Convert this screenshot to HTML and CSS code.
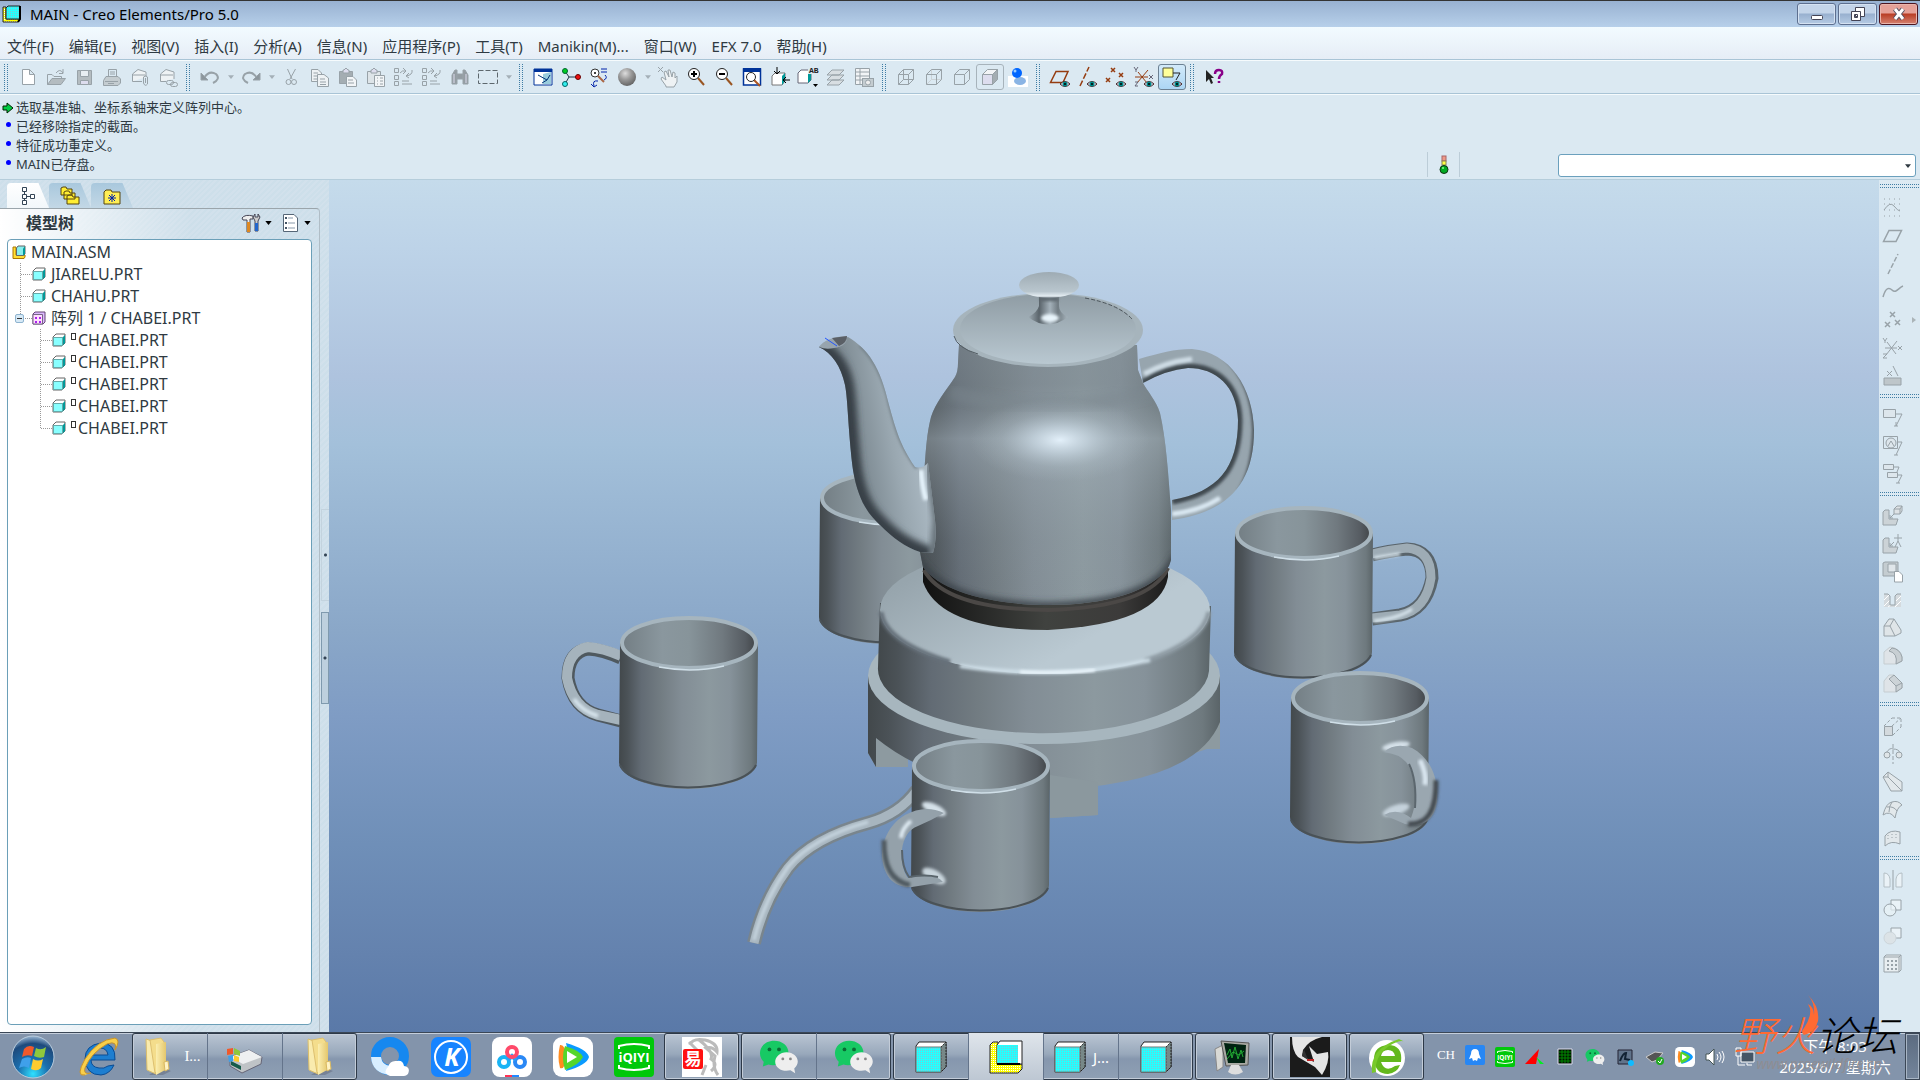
FILE: index.html
```
<!DOCTYPE html>
<html lang="zh-CN">
<head>
    <meta charset="utf-8">
    <meta name="viewport" content="width=device-width, initial-scale=1">
    <title>MAIN - Creo Elements/Pro 5.0</title>
    <link rel="stylesheet" href="styles.css">
</head>
<body>
    <!-- 共用图形 -->
    <svg class="defs" width="0" height="0" aria-hidden="true">
        <defs>
            <pattern id="cyanDots" width="2" height="2" patternUnits="userSpaceOnUse">
                <rect width="2" height="2" fill="#2ff"/><rect width="1" height="1" fill="#7cc8d0"/>
            </pattern>
            <pattern id="yellowDots" width="2" height="2" patternUnits="userSpaceOnUse">
                <rect width="2" height="2" fill="#ff0"/><rect width="1" height="1" fill="#fff"/>
            </pattern>
            <linearGradient id="folderFill"><stop offset="0" stop-color="#fbeeb0"/><stop offset="1" stop-color="#e2c366"/></linearGradient>
            <radialGradient id="ball" cx=".4" cy=".3" r=".7"><stop offset="0" stop-color="#ddd"/><stop offset=".5" stop-color="#999"/><stop offset="1" stop-color="#666"/></radialGradient>
            <radialGradient id="orb" cx=".5" cy=".9" r=".9"><stop offset="0" stop-color="#2fe0ff"/><stop offset=".4" stop-color="#1b6fae"/><stop offset=".8" stop-color="#1d4a7c"/><stop offset="1" stop-color="#9db9d4"/></radialGradient>
        </defs>
        <symbol id="part" viewBox="0 0 14 14">
            <path d="M1 4L4 1H13V10L10 13H1Z" fill="#fff" stroke="#666"/>
            <path d="M10.500 4.500L13 2V10L10.500 12.500Z" fill="#099"/>
            <rect x="1.500" y="4.500" width="9" height="8" fill="#8ff" stroke="#6aa"/>
        </symbol>
        <symbol id="asm" viewBox="0 0 14 14">
            <path d="M1 2H4V10H13V12L12 13.500H1Z" fill="#fd3" stroke="#a70"/>
            <path d="M4.500 3L6 1H13V9L11.500 10.500H4.500Z" fill="#8ee" stroke="#666"/>
            <path d="M11 3.500L13 1.500V9L11 10.500Z" fill="#099"/>
        </symbol>
        <symbol id="elbow" viewBox="0 0 12 22"><path d="M.5 0V22M1 11.500H12" fill="none" stroke="#999" stroke-dasharray="1 1"/></symbol>
        <symbol id="elbow-end" viewBox="0 0 12 22"><path d="M.5 0V11.500H12" fill="none" stroke="#999" stroke-dasharray="1 1"/></symbol>
        <symbol id="eye" viewBox="0 0 10 8"><path d="M0 4Q5 -1 10 4Q5 9 0 4Z" fill="#dde" stroke="#422"/><circle cx="5" cy="4" r="2.500" fill="#088"/><circle cx="5" cy="4" r="1"/></symbol>
        <symbol id="folder" viewBox="0 0 34 40">
            <path d="M20 30L30 34L22 38L8 38Z" fill="#445" opacity=".3"/>
            <path d="M5 2L14 5L15 37L6 33Z" fill="#f9ebae" stroke="#d9bd6c"/>
            <path d="M9 3L20 1L23 5V28L14 36Z" fill="#f4dd8c" stroke="#ddc070"/>
            <path d="M15 7L25 5V26L26 32L15 38Z" fill="url(#folderFill)"/>
            <path d="M23 25L27 24L28 32L24 34Z" fill="#fff3c4" stroke="#d8b860"/>
        </symbol>
        <symbol id="wechat" viewBox="0 0 42 36">
            <path d="M16 1C7 1 1 7 1 14C1 18 3 21 5 23L4 28L10 26C17 28 31 25 31 14C31 6 24 1 16 1Z" fill="#17c964"/>
            <circle cx="11" cy="10" r="2" fill="#0a6b35"/><circle cx="21" cy="10" r="2" fill="#0a6b35"/>
            <path d="M29 13C22 13 17 18 17 23C17 30 25 34 33 32L38 35L37 30C45 23 39 13 29 13Z" fill="#eee"/>
            <circle cx="25" cy="20" r="1.500" fill="#888"/><circle cx="33" cy="20" r="1.500" fill="#888"/>
        </symbol>
        <symbol id="cube" viewBox="0 0 34 34">
            <path d="M2 6L5 2H32V27L27 32H2Z" fill="#fff" stroke="#222"/>
            <path d="M27 7L32 2V27L27 32Z" fill="#788" stroke="#222" stroke-dasharray="2 1"/>
            <rect x="2" y="7" width="25" height="25" fill="url(#cyanDots)" stroke="#777"/>
        </symbol>
        <symbol id="caret" viewBox="0 0 8 5"><path d="M0 0H8L4 5Z" fill="currentColor"/></symbol>
        <symbol id="tencent" viewBox="0 0 40 40">
            <rect width="40" height="40" rx="9" fill="#fff"/>
            <path d="M7 8Q12 7 14 20Q12 33 7 31Q4 20 7 8Z" fill="#ff8b1f"/>
            <path d="M13 6Q34 12 36 20Q34 28 13 34Q17 20 13 6Z" fill="#0a9bff"/>
            <path d="M12 9Q28 14 30 20Q26 28 12 33Q8 20 12 9Z" fill="#54d62c"/>
            <path d="M14 14L24 20L14 26Z" fill="#fff"/>
        </symbol>
    </svg>

    <header class="titlebar">
        <svg class="app-icon" viewBox="0 0 20 18"><path d="M1 2H4V14H18V15L16 17H1Z" fill="url(#yellowDots)" stroke="#222"/><path d="M4 3L6 1H18V14H4Z" fill="url(#cyanDots)" stroke="#222"/><path d="M18 1V14L16 17" fill="none" stroke="#000" stroke-width="2"/></svg>
        <h1>MAIN - Creo Elements/Pro 5.0</h1>
        <div class="window-buttons">
            <button aria-label="最小化"><svg viewBox="0 0 16 16"><rect x="2.500" y="9.500" width="11" height="4" rx="1" fill="#fff" stroke="#445"/></svg></button>
            <button aria-label="还原"><svg viewBox="0 0 16 16"><path d="M5.500 1.500H14.500V10.500H5.500Z" fill="#fff" stroke="#445"/><path d="M1.500 5.500H10.500V14.500H1.500ZM4.500 8.500H7.500V11.500H4.500Z" fill="#fff" stroke="#445" fill-rule="evenodd"/></svg></button>
            <button class="close" aria-label="关闭"><svg viewBox="0 0 16 16"><path d="M4 3L12 13M12 3L4 13" stroke="#545060" stroke-width="5"/><path d="M4 3L12 13M12 3L4 13" stroke="#fff" stroke-width="3"/></svg></button>
        </div>
    </header>

    <nav class="menubar">
        <a href="#">文件(F)</a><a href="#">编辑(E)</a><a href="#">视图(V)</a><a href="#">插入(I)</a><a href="#">分析(A)</a><a href="#">信息(N)</a><a href="#">应用程序(P)</a><a href="#">工具(T)</a><a href="#">Manikin(M)...</a><a href="#">窗口(W)</a><a href="#">EFX 7.0</a><a href="#">帮助(H)</a>
    </nav>

    <div class="toolbar">
        <span class="grip"></span>
        <button aria-label="新建"><svg class="gray" viewBox="0 0 24 24"><path d="M6.500 4.500H13.500L18.500 9.500V19.500H6.500ZM13.500 4.500V9.500H18.500" fill="#fff"/></svg></button>
        <button aria-label="打开"><svg class="gray" viewBox="0 0 24 24"><path d="M3.500 19.500V9.500H8L10 11.500H17.500V14" /><path d="M3.500 19.500L8 13.500H21.500L17 19.500Z" fill="#b4bcc0"/><path d="M12 8Q16 3 19 8M19 4V8.500H15"/></svg></button>
        <button aria-label="保存"><svg class="gray" viewBox="0 0 24 24"><path d="M5.500 5.500H19.500V19.500H5.500Z" fill="#b4bcc0"/><path d="M8.500 5.500H16.500V11.500H8.500Z" fill="#e8eef2"/><path d="M8.500 15.500H16.500V19.500H8.500Z" fill="#dde"/></svg></button>
        <button aria-label="打印"><svg class="gray" viewBox="0 0 24 24"><path d="M8.500 12V4.500H16.500V12M10 7H15M10 9H15" fill="none"/><path d="M3.500 15.500L6 11.500H18L20.500 14V18L18 20.500H3.500Z" fill="#c4ccd0"/><path d="M5 16.500H18M8 18.500H14"/></svg></button>
        <button aria-label="发送附件"><svg class="gray" viewBox="0 0 24 24"><path d="M4.500 16.500V9L10 4.500L18 7V12M4.500 10H17M4.500 16.500H14" fill="#eef2f4"/><path d="M15.500 18V12Q18 9.500 19.500 12V19Q17 22 15.500 18M17.500 13V18"/></svg></button>
        <button aria-label="发送链接"><svg class="gray" viewBox="0 0 24 24"><path d="M4.500 16.500V9L10 4.500L18 7V14M4.500 10H17M4.500 16.500H10" fill="#eef2f4"/><rect x="10.500" y="15.500" width="7" height="4" rx="2"/><rect x="14.500" y="17.500" width="7" height="4" rx="2"/></svg></button>
        <span class="grip"></span>
        <button aria-label="撤消"><svg class="gray" viewBox="0 0 24 24"><path d="M6 13Q11 5 18 9Q23 14 15 18" stroke-width="2"/><path d="M3 8V15H10Z" fill="#8c969c"/></svg></button>
        <button class="drop" aria-label="撤消列表"><svg><use href="#caret"/></svg></button>
        <button aria-label="重做"><svg class="gray" viewBox="0 0 24 24"><path d="M18 13Q13 5 6 9Q1 14 9 18" stroke-width="2"/><path d="M21 8V15H14Z" fill="#8c969c"/></svg></button>
        <button class="drop" aria-label="重做列表"><svg><use href="#caret"/></svg></button>
        <button aria-label="剪切"><svg class="gray" viewBox="0 0 24 24"><path d="M7.500 4L12 14M15.500 4L10 14"/><circle cx="8.500" cy="17" r="2.500"/><circle cx="14" cy="17" r="2.500"/></svg></button>
        <button aria-label="复制"><svg class="gray" viewBox="0 0 24 24"><path d="M3.500 4.500H10L13.500 8V16.500H3.500ZM5.500 8H10M5.500 11H10M5.500 14H9" fill="#eef2f4"/><path d="M9.500 9.500H16L20.500 13V21.500H9.500ZM12 14H17M12 17H18M12 19.500H18" fill="#eef2f4"/></svg></button>
        <button aria-label="粘贴"><svg class="gray" viewBox="0 0 24 24"><path d="M3.500 6.500H16.500V18.500H3.500Z" fill="#a4adb2"/><path d="M7 8V5H8L10 3L12 5H13V8Z" fill="#dde"/><path d="M10.500 11.500H17L20.500 15V21.500H10.500ZM12 15H17M12 18H18" fill="#f2f5f7"/></svg></button>
        <button aria-label="选择性粘贴"><svg class="gray" viewBox="0 0 24 24"><path d="M3.500 6.500H16.500V18.500H3.500Z" fill="#dde4e8"/><path d="M7 8V5H8L10 3L12 5H13V8Z" fill="#dde"/><path d="M10.500 10.500H20.500V21.500H10.500ZM13 13H14M13 16H14M13 19H14M16 13H19M16 16H19M16 19H19" fill="#f2f5f7"/></svg></button>
        <button aria-label="再生"><svg class="gray" viewBox="0 0 24 24"><path d="M2.500 3.500H6.500V7.500H2.500ZM2.500 10.500H6.500V14.500H2.500ZM2.500 16.500H6.500V20.500H2.500ZM10 16H17M10 19H20M8 8Q10 5 14 6M11 3L14 6L11 9M20 5Q21 10 14 11M17 8L14 11L17 13"/></svg></button>
        <button aria-label="再生管理器"><svg class="gray" viewBox="0 0 24 24"><path d="M2.500 3.500H6.500V7.500H2.500ZM2.500 10.500H6.500V14.500H2.500ZM2.500 16.500H6.500V20.500H2.500ZM10 16H17M10 19H20M8 8Q10 5 14 6M11 3L14 6L11 9M20 5Q21 10 14 11M17 8L14 11L17 13"/></svg></button>
        <button aria-label="查找"><svg class="gray" viewBox="0 0 24 24"><path d="M4 19V10L7 5H9V19ZM20 19V10L17 5H15V19ZM9 9H15V14H9Z" fill="#949da3"/><path d="M6 9V18M18 9V18" stroke="#dde"/></svg></button>
        <button aria-label="选取框"><svg class="gray" viewBox="0 0 24 24"><path d="M2.500 5.500H21.500V18.500H2.500Z" stroke-dasharray="5 2" stroke="#5d676d"/></svg></button>
        <button class="drop" aria-label="选取方式"><svg><use href="#caret"/></svg></button>
        <span class="grip"></span>
        <button aria-label="重画"><svg viewBox="0 0 24 24"><path d="M3 4H21V20H3Z" fill="#fff" stroke="#039"/><path d="M3 4H21V7H3Z" fill="#039"/><path d="M12 9L20 7V19H12Z" fill="#9cd"/><path d="M7 10L16 15L11 18M16 15L19 10" fill="none" stroke="#037"/></svg></button>
        <button aria-label="旋转中心"><svg viewBox="0 0 24 24"><path d="M6 6L10 12H19M10 12L6 19" stroke="#234" fill="none"/><circle cx="6" cy="6" r="2.500" fill="#0c2" stroke="#063"/><circle cx="19" cy="12" r="2.500" fill="#e11" stroke="#600"/><circle cx="6" cy="19" r="2.500" fill="#3ee" stroke="#066"/></svg></button>
        <button aria-label="定向模式"><svg viewBox="0 0 24 24"><circle cx="8" cy="8" r="4" fill="#fff" stroke="#333"/><circle cx="8" cy="8" r="1"/><path d="M11 11L17 17" stroke="#a64" stroke-width="2"/><path d="M14 4H20M14 7H20M18 10Q21 13 17 15M11 16Q5 15 7 21M4 19L7 22L10 20" stroke="#02a" fill="none"/></svg></button>
        <button aria-label="外观库"><svg viewBox="0 0 24 24"><circle cx="12" cy="12" r="9" fill="url(#ball)"/></svg></button>
        <button class="drop" aria-label="外观列表"><svg><use href="#caret"/></svg></button>
        <button aria-label="拖动"><svg class="gray" viewBox="0 0 24 24"><path d="M2 2L7 7M7 2L2 7"/><path d="M10 21L5 14L6 12L10 15L8 7L10 6L13 12L12 5L14 5L16 12L17 7L19 8L19 13L21 11V17L18 22H10Z" fill="#eef2f4"/></svg></button>
        <button aria-label="放大"><svg viewBox="0 0 24 24"><path d="M14 13L20 20" stroke="#952" stroke-width="2"/><circle cx="10" cy="9" r="5.500" fill="#fff" stroke="#222"/><path d="M7 9H13M10 6V12" stroke="#000" stroke-width="2"/></svg></button>
        <button aria-label="缩小"><svg viewBox="0 0 24 24"><path d="M14 13L20 20" stroke="#952" stroke-width="2"/><circle cx="10" cy="9" r="5.500" fill="#fff" stroke="#222"/><path d="M7 9H13" stroke="#000" stroke-width="2"/></svg></button>
        <button aria-label="重新调整"><svg viewBox="0 0 24 24"><path d="M3.500 4H20.500V20H3.500Z" fill="#fff" stroke="#039" stroke-width="1.500"/><path d="M3 3H21V7H3Z" fill="#039"/><path d="M14 15L20 21" stroke="#a52" stroke-width="2"/><circle cx="11" cy="12" r="4.500" fill="#fff" stroke="#222"/></svg></button>
        <button aria-label="重定向"><svg viewBox="0 0 24 24"><path d="M4 11L7 8H17V16L14 20H4Z" fill="#fff" stroke="#777"/><path d="M14 11L17 8V16L14 20Z" fill="#099"/><path d="M9 2V9M6 6L9 9L12 6M22 15H15M18 12L15 15L18 18" stroke="#000" fill="none"/></svg></button>
        <button aria-label="已命名视图"><svg viewBox="0 0 24 24"><path d="M2 8L5 5H15V15L12 18H2Z" fill="#fff" stroke="#667"/><path d="M12 8L15 5V15L12 18Z" fill="#099"/><path d="M17 19H22L19.500 22Z"/><path d="M12 0H24V9H12Z" fill="#dbe9f2"/><text x="13" y="8" class="icon-text">AB</text></svg></button>
        <button aria-label="层"><svg class="gray" viewBox="0 0 24 24"><path d="M3 20L8 15H20L15 20ZM3 15L8 10H20L15 15ZM3 10L8 5H20L15 10Z" fill="#d8dee2"/></svg></button>
        <button aria-label="视图管理器"><svg class="gray" viewBox="0 0 24 24"><path d="M3.500 3.500H17.500V19.500H3.500ZM3.500 7H17.500M3.500 11H17.500M3.500 15H17M8 3.500V19.500" fill="#f2f4f6"/><rect x="10.500" y="13.500" width="11" height="8" fill="#c4ccd0"/><circle cx="16" cy="17.500" r="2.500" fill="#eee"/></svg></button>
        <span class="grip"></span>
        <button aria-label="线框"><svg class="gray" viewBox="0 0 24 24"><path d="M4.500 9.500H14.500V19.500H4.500ZM9.500 4.500H19.500V14.500H9.500ZM4.500 9.500L9.500 4.500M14.500 9.500L19.500 4.500M14.500 19.500L19.500 14.500M4.500 19.500L9.500 14.500"/></svg></button>
        <button aria-label="隐藏线"><svg class="gray" viewBox="0 0 24 24"><path d="M9.500 4.500V14.500H19M4.500 19.500L9.500 14.500" stroke="#cbd2d6"/><path d="M4.500 9.500H14.500V19.500H4.500ZM4.500 9.500L9.500 4.500H19.500V14.500L14.500 19.500M14.500 9.500L19.500 4.500"/></svg></button>
        <button aria-label="消隐"><svg class="gray" viewBox="0 0 24 24"><path d="M4.500 9.500H14.500V19.500H4.500ZM4.500 9.500L9.500 4.500H19.500V14.500L14.500 19.500M14.500 9.500L19.500 4.500"/></svg></button>
        <button class="framed" aria-label="着色"><svg class="gray" viewBox="0 0 24 24"><path d="M4.500 9.500H14.500V19.500H4.500Z" fill="#dde"/><path d="M4.500 9.500L9.500 4.500H19.500L14.500 9.500Z" fill="#f2f4f6"/><path d="M14.500 9.500L19.500 4.500V14.500L14.500 19.500Z" fill="#a4adb2"/></svg></button>
        <button aria-label="增强的真实感"><svg viewBox="0 0 24 24"><path d="M2 11H22V22H2Z" fill="#fff"/><ellipse cx="14" cy="16" rx="6" ry="4" fill="#8ab4e4"/><circle cx="11" cy="8" r="5" fill="#06f"/><circle cx="9" cy="6" r="1.500" fill="#9cf"/></svg></button>
        <span class="grip"></span>
        <button aria-label="平面显示"><svg viewBox="0 0 24 24"><path d="M2.500 17.500L8 6.500H20L15 17.500Z" fill="none" stroke="#953c10" stroke-width="1.500"/><use href="#eye" x="12" y="15" width="10" height="8"/></svg></button>
        <button aria-label="轴显示"><svg viewBox="0 0 24 24"><path d="M4 21L13 2" stroke="#953c10" stroke-width="1.500" stroke-dasharray="6 2"/><use href="#eye" x="11" y="15" width="10" height="8"/></svg></button>
        <button aria-label="点显示"><svg viewBox="0 0 24 24"><path d="M7 3L11 7M11 3L7 7M15 8L19 12M19 8L15 12M2 13L6 17M6 13L2 17" stroke="#953c10" stroke-width="1.500"/><use href="#eye" x="12" y="15" width="10" height="8"/></svg></button>
        <button aria-label="坐标系显示"><svg viewBox="0 0 24 24"><path d="M3 12H16M5 18L16 5M6 7L15 18" stroke="#953c10"/><path d="M2 2L4 5L6 2M4 5V7M3 17H6L3 21H6M17 10L21 14M21 10L17 14" stroke="#667" fill="none"/><use href="#eye" x="12" y="15" width="10" height="8"/></svg></button>
        <button class="framed active" aria-label="注释显示"><svg viewBox="0 0 24 24"><path d="M3 3H13V12H3Z" fill="#ff9" stroke="#553"/><path d="M13 8H20L16 15" fill="none" stroke="#222"/><use href="#eye" x="12" y="15" width="10" height="8"/></svg></button>
        <span class="grip"></span>
        <button aria-label="上下文帮助"><svg viewBox="0 0 24 24"><path d="M4 5V17L7 14L9 19L11 18L9 13H12Z" fill="#222"/><path d="M13 9Q13 5 17 5Q21 5 20 9Q17 11 17 14M17 16V18" fill="none" stroke="#808" stroke-width="2.500"/></svg></button>
    </div>

    <section class="message-area">
        <ul class="messages">
            <li><svg viewBox="0 0 12 12"><path d="M1 4H5V1L11 6L5 11V8H1Z" fill="#0c4" stroke="#020"/></svg>选取基准轴、坐标系轴来定义阵列中心。</li>
            <li><i class="dot"></i>已经移除指定的截面。</li>
            <li><i class="dot"></i>特征成功重定义。</li>
            <li><i class="dot"></i>MAIN已存盘。</li>
        </ul>
        <div class="status">
            <svg class="light" viewBox="0 0 12 20"><rect x="4" y="1" width="4" height="5" fill="#e98" stroke="#a66"/><rect x="4" y="6" width="4" height="4" fill="#ff4" stroke="#885"/><circle cx="6" cy="14.500" r="4" fill="#0a2" stroke="#131"/><circle cx="5" cy="13" r="1" fill="#8f8"/></svg>
        </div>
        <label class="filter"><select aria-label="选取过滤器"><option></option></select><svg><use href="#caret"/></svg></label>
    </section>

    <main class="workspace">
        <aside class="sidebar">
            <div class="tabs">
                <button class="tab selected" aria-label="模型树"><svg viewBox="0 0 16 20"><path d="M2.500 1.500H6.500V5.500H2.500ZM2.500 8.500H6.500V12.500H2.500ZM2.500 14.500H6.500V18.500H2.500ZM10.500 8.500H14.500V12.500H10.500ZM4.500 5.500V8.500M4.500 12.500V14.500M6.500 10.500H10.500" fill="#fff" stroke="#345"/></svg></button>
                <button class="tab" aria-label="文件夹浏览器"><svg viewBox="0 0 20 20"><path d="M1 9V2L3 1H6L7 3H12V9ZM4 13V6L6 5H9L10 7H15V13ZM7 18V10L9 9H12L13 11H19V18Z" fill="#fe3" stroke="#541"/></svg></button>
                <button class="tab" aria-label="收藏夹"><svg viewBox="0 0 20 20"><path d="M2 18V6L4 4H9L10 6H18V18Z" fill="#fe5" stroke="#541"/><path d="M10 8V16M6 12H14M7 9L13 15M13 9L7 15" stroke="#02a"/></svg></button>
            </div>
            <div class="panel">
                <div class="panel-head">
                    <h2>模型树</h2>
                    <button aria-label="设置"><svg class="tool" viewBox="0 0 20 20"><path d="M1 5Q4 1 12 3V6H9V19H6V7H2Z" fill="#eee" stroke="#445"/><path d="M6 9H9V19H6Z" fill="#d82"/><path d="M14 8L12 4L14 1V4H17V1L19 4L17 8V18H14Z" fill="#ccc" stroke="#445"/><path d="M14 10H17V18H14Z" fill="#26c"/></svg><svg class="mini"><use href="#caret"/></svg></button>
                    <button aria-label="显示"><svg class="tool" viewBox="0 0 20 20"><path d="M3.500 1.500H14L17.500 5V18.500H3.500Z" fill="#fff" stroke="#567"/><path d="M8 5H13M8 10H15M8 15H15" stroke="#89a"/><path d="M5 4H7V6H5ZM5 9H7V11H5ZM5 14H7V16H5Z" fill="#456"/></svg><svg class="mini"><use href="#caret"/></svg></button>
                </div>
                <div class="tree">
                    <div class="row"><svg class="node"><use href="#asm"/></svg><span>MAIN.ASM</span></div>
                    <ul>
                        <li class="row"><svg class="elbow"><use href="#elbow"/></svg><svg class="node"><use href="#part"/></svg><span>JIARELU.PRT</span></li>
                        <li class="row"><svg class="elbow"><use href="#elbow"/></svg><svg class="node"><use href="#part"/></svg><span>CHAHU.PRT</span></li>
                        <li>
                            <div class="row"><svg class="elbow"><use href="#elbow-end"/></svg><button class="toggle" aria-label="折叠"></button><svg class="node" viewBox="0 0 14 14"><path d="M1 3L3 1H13V11L11 13H1Z" fill="#dbf" stroke="#647"/><path d="M1 3.500H10.500V13H1Z" fill="#fdf" stroke="#768"/><path d="M3 6H5V8H3ZM7 6H9V8H7ZM3 10H5V12H3ZM7 10H9V12H7Z" fill="#a2e"/></svg><span>阵列 1 / CHABEI.PRT</span></div>
                            <ul>
                                <li class="row"><svg class="elbow"><use href="#elbow"/></svg><svg class="node"><use href="#part"/></svg><i class="mark"></i><span>CHABEI.PRT</span></li>
                                <li class="row"><svg class="elbow"><use href="#elbow"/></svg><svg class="node"><use href="#part"/></svg><i class="mark"></i><span>CHABEI.PRT</span></li>
                                <li class="row"><svg class="elbow"><use href="#elbow"/></svg><svg class="node"><use href="#part"/></svg><i class="mark"></i><span>CHABEI.PRT</span></li>
                                <li class="row"><svg class="elbow"><use href="#elbow"/></svg><svg class="node"><use href="#part"/></svg><i class="mark"></i><span>CHABEI.PRT</span></li>
                                <li class="row"><svg class="elbow"><use href="#elbow-end"/></svg><svg class="node"><use href="#part"/></svg><i class="mark"></i><span>CHABEI.PRT</span></li>
                            </ul>
                        </li>
                    </ul>
                </div>
            </div>
            <div class="splitter"><span></span><span class="raised"></span></div>
        </aside>

        <div class="viewport">
            <svg viewBox="329 180 1550 852" role="img" aria-label="茶具模型">
                <defs>
                    <linearGradient id="wall">
                        <stop offset="0" stop-color="#42484b"/><stop offset=".06" stop-color="#4b5257"/><stop offset=".16" stop-color="#626b74"/><stop offset=".3" stop-color="#727c82"/><stop offset=".45" stop-color="#828d95"/><stop offset=".65" stop-color="#8c999f"/><stop offset=".8" stop-color="#86929a"/><stop offset=".95" stop-color="#6e797e"/><stop offset="1" stop-color="#5a6468"/>
                    </linearGradient>
                    <linearGradient id="inside">
                        <stop offset="0" stop-color="#737e84"/><stop offset=".3" stop-color="#8a979e"/><stop offset=".5" stop-color="#87949a"/><stop offset=".75" stop-color="#70797f"/><stop offset=".92" stop-color="#565c62"/><stop offset="1" stop-color="#414548"/>
                    </linearGradient>
                    <linearGradient id="lid" x2="0" y2="1"><stop offset="0" stop-color="#8f9ca4"/><stop offset="1" stop-color="#b9c8d1"/></linearGradient>
                    <linearGradient id="knob" x2="0" y2="1"><stop offset="0" stop-color="#9eabb3"/><stop offset=".75" stop-color="#b9c6ce"/><stop offset=".93" stop-color="#e5eef3"/><stop offset="1" stop-color="#66717a"/></linearGradient>
                    <linearGradient id="stem"><stop offset="0" stop-color="#a0adb5"/><stop offset=".28" stop-color="#59636a"/><stop offset=".55" stop-color="#a4b1ba"/><stop offset=".75" stop-color="#707b82"/><stop offset="1" stop-color="#a8b5bd"/></linearGradient>
                    <linearGradient id="shoulder" x2="0" y2="1">
                        <stop offset="0" stop-color="#828e96" stop-opacity=".5"/><stop offset=".15" stop-color="#7d8991" stop-opacity=".4"/><stop offset=".24" stop-color="#8c99a1" stop-opacity=".3"/><stop offset=".36" stop-color="#b4c3cd" stop-opacity=".42"/><stop offset=".5" stop-color="#a9b7c1" stop-opacity=".3"/><stop offset=".75" stop-color="#98a6af" stop-opacity=".1"/><stop offset="1" stop-color="#98a6af" stop-opacity="0"/>
                    </linearGradient>
                    <radialGradient id="shine"><stop offset="0" stop-color="#e3f0fa"/><stop offset=".3" stop-color="#cddce7" stop-opacity=".7"/><stop offset=".65" stop-color="#b8c7d1" stop-opacity=".25"/><stop offset="1" stop-color="#b0bec8" stop-opacity="0"/></radialGradient>
                    <linearGradient id="spout" gradientUnits="userSpaceOnUse" x1="845" y1="460" x2="925" y2="445"><stop offset="0" stop-color="#59636b"/><stop offset=".2" stop-color="#7e8b93"/><stop offset=".6" stop-color="#99a7b0"/><stop offset="1" stop-color="#aebcc6"/></linearGradient>
                    <linearGradient id="table" gradientUnits="userSpaceOnUse" x1="960" y1="550" x2="1030" y2="673"><stop offset="0" stop-color="#97a5ad"/><stop offset="1" stop-color="#bac9d2"/></linearGradient>
                    <linearGradient id="ring"><stop offset="0" stop-color="#111"/><stop offset=".5" stop-color="#40423f"/><stop offset=".8" stop-color="#3c3b3a"/><stop offset="1" stop-color="#1c1c1c"/></linearGradient>
                    <filter id="soft" x="-40%" y="-40%" width="180%" height="180%"><feGaussianBlur stdDeviation="3"/></filter>
                    <filter id="softer" x="-40%" y="-40%" width="180%" height="180%"><feGaussianBlur stdDeviation="1.500"/></filter>
                    <path id="spoutShape" d="M819 347C832 353 841 366 845 385C848 400 848 430 853 470C858 500 868 514 880 525C893 538 905 547 920 552L933 553Q937 540 935 520L928 463Q922 469 915 467C900 445 896 430 889 405C880 366 868 349 848 337Z"/>
                    <path id="potShape" d="M959 345L958 363Q958 372 955 377C945 392 936 402 931 417C925 440 925 470 922 510L920 552L923 567C940 592 995 605 1048 605C1105 605 1152 592 1169 566L1171 560V510C1168 470 1166 440 1160 413C1156 400 1147 391 1143 383L1138 370L1137 345Z"/>
                    <path id="potHandle" d="M1139 359C1160 353 1174 349 1192 349C1230 352 1253 388 1254 430C1254 484 1228 512 1172 520V500C1218 492 1238 468 1238 420C1237 386 1216 368 1188 368Q1166 370 1143 383Z"/>
                    <clipPath id="spoutClip"><use href="#spoutShape"/></clipPath>
                    <clipPath id="potClip"><use href="#potShape"/></clipPath>
                    <clipPath id="handleClip"><use href="#potHandle"/></clipPath>
                    <g id="cup">
                        <path d="M-69 0L-70 119A69 27 0 0 0 68 119L69 0Z" fill="url(#wall)"/>
                        <path d="M-69 122A69 27 0 0 0 67 122" fill="none" stroke="#4a5257" stroke-width="2"/>
                        <ellipse rx="67" ry="25" fill="url(#inside)" stroke="#a6b5be" stroke-width="4"/>
                        <path d="M-30 24A69 27 0 0 0 35 23" fill="none" stroke="#d0dfe8" stroke-width="1.500"/>
                    </g>
                </defs>

                <!-- 杯子（后） -->
                <use href="#cup" x="889" y="498"/>

                <!-- 加热炉 -->
                <path d="M868 720V753L876 767H908V750H1050V818L1098 815V785L1207 749H1220V710Z" fill="#8d9aa0"/>
                <path d="M868 676V753L876 767V738Q940 790 1044 790Q1195 785 1220 722V676Z" fill="url(#wall)"/>
                <path d="M1050 775V818L1098 815V782Z" fill="#8b989e"/>
                <ellipse cx="1044" cy="676" rx="176" ry="68" fill="#a7b6be"/>
                <path d="M880 603L878 667A165 64 0 0 0 1209 671L1211 606Z" fill="url(#wall)"/>
                <ellipse cx="1045" cy="610" rx="165" ry="64" fill="url(#table)"/>
                <path d="M881 612Q885 642 950 662" fill="none" stroke="#66717a" stroke-width="5" filter="url(#softer)"/>
                <path d="M1209 612Q1203 642 1145 661" fill="none" stroke="#8d9aa2" stroke-width="5" filter="url(#softer)"/>
                <path d="M960 666Q1060 681 1150 660" fill="none" stroke="#cddde6" stroke-width="4" filter="url(#softer)"/>
                <path d="M1020 672Q1060 674 1095 670" fill="none" stroke="#eef8fe" stroke-width="3" filter="url(#softer)"/>

                <!-- 茶壶 -->
                <path d="M923 564V582Q940 630 1048 630Q1160 624 1168 577V564Z" fill="url(#ring)"/>
                <path d="M924 570Q945 609 1048 610Q1150 607 1168 568" fill="none" stroke="#4b4846" stroke-width="4"/>
                <use href="#potHandle" fill="#97a5ae"/>
                <g clip-path="url(#handleClip)" fill="none">
                    <path d="M1143 384Q1166 369 1188 368C1216 368 1237 386 1238 420C1238 468 1218 492 1172 500" stroke="#404950" stroke-width="9" filter="url(#softer)"/>
                    <path d="M1144 374Q1166 362 1192 359" stroke="#d0dee7" stroke-width="5" filter="url(#softer)"/>
                    <path d="M1172 514Q1200 511 1220 498" stroke="#dceaf4" stroke-width="5" filter="url(#softer)"/>
                    <path d="M1225 356Q1254 382 1255 430Q1254 470 1240 492" stroke="#4f585e" stroke-width="6" filter="url(#softer)"/>
                </g>
                <use href="#potShape" fill="url(#wall)"/>
                <use href="#potShape" fill="url(#shoulder)"/>
                <g clip-path="url(#potClip)">
                    <path d="M950 392Q1050 420 1150 392" fill="none" stroke="#7a868e" stroke-width="14" opacity=".4" filter="url(#soft)"/>
                    <ellipse cx="1060" cy="440" rx="90" ry="42" fill="url(#shine)"/>
                    <path d="M915 552Q935 604 1048 606Q1155 604 1176 556" fill="none" stroke="#3b4349" stroke-width="7" filter="url(#soft)"/>
                </g>
                <ellipse cx="1048" cy="330" rx="95" ry="37" fill="#a6b4bc"/>
                <path d="M954 336Q957 348 978 354" fill="none" stroke="#525c62" stroke-width="1"/>
                <ellipse cx="1048" cy="329" rx="88" ry="35" fill="url(#lid)"/>
                <path d="M1085 298Q1118 304 1132 319" fill="none" stroke="#4c555b" stroke-dasharray="4 2"/>
                <path d="M1039 296V306Q1037 313 1028 317Q1048 332 1068 317Q1059 313 1059 306V296Z" fill="url(#stem)"/>
                <path d="M1040 297H1058V301H1040Z" fill="#5c666d" filter="url(#softer)"/>
                <ellipse cx="1050" cy="318" rx="9" ry="4" fill="#e9f5fc" filter="url(#softer)"/>
                <ellipse cx="1049" cy="285" rx="30" ry="13" fill="url(#knob)"/>

                <use href="#spoutShape" fill="url(#spout)"/>
                <g clip-path="url(#spoutClip)" fill="none">
                    <path d="M815 349C832 353 841 366 845 385C848 400 848 430 853 470C858 500 868 514 880 525C893 538 905 547 930 556" stroke="#394146" stroke-width="18" filter="url(#soft)"/>
                    <path d="M860 345C876 360 885 380 890 405C897 432 901 446 917 468" stroke="#76838b" stroke-width="4" filter="url(#softer)"/>
                    <path d="M930 463L937 520L934 553" stroke="#5e6970" stroke-width="8" filter="url(#soft)"/>
                    <path d="M921 470Q922 486 926 500" stroke="#e6f4fd" stroke-width="5" filter="url(#softer)"/>
                </g>
                <path d="M819 347Q826 337 847 336Q848 346 834 348Q826 350 819 347Z" fill="#97a4ae"/>
                <path d="M832 338L847 336Q847 343 839 346Z" fill="#5a5f66"/>
                <path d="M825 338L837 346" stroke="#25f"/>

                <!-- 右侧杯子 -->
                <path d="M1372 555Q1388 551 1407 549Q1432 550 1432 578Q1426 610 1400 615L1372 619" fill="none" stroke="#59646b" stroke-width="13"/>
                <path d="M1372 554Q1388 550 1407 548Q1431 550 1431 578Q1426 610 1400 615L1372 618" fill="none" stroke="#9eacb5" stroke-width="9"/>
                <path d="M1374 558L1400 554M1374 621Q1400 618 1412 609" fill="none" stroke="#dce9f1" stroke-width="3" filter="url(#softer)"/>
                <use href="#cup" x="1304" y="533"/>
                <use href="#cup" x="1360" y="698"/>
                <ellipse cx="1396" cy="746" rx="14" ry="4" fill="#d5e1e9" transform="rotate(-10 1396 746)" filter="url(#softer)"/>
                <ellipse cx="1396" cy="810" rx="14" ry="5" fill="#c5d2db" transform="rotate(-18 1396 810)" filter="url(#softer)"/>
                <path d="M1384 752Q1395 742 1412 748C1430 758 1437 776 1437 793C1438 818 1425 828 1405 824L1384 815Q1397 807 1411 818C1418 800 1418 778 1406 762Q1399 754 1384 752Z" fill="#9aa7b0"/>
                <path d="M1436 780Q1437 826 1408 824" fill="none" stroke="#434a50" stroke-width="5" filter="url(#softer)"/>
                <path d="M1409 764Q1417 780 1415 808" fill="none" stroke="#5c676e" stroke-width="2"/>
                <path d="M1420 760Q1427 774 1425 785" fill="none" stroke="#dbe8f2" stroke-width="5" filter="url(#softer)"/>

                <!-- 左侧杯子 -->
                <path d="M621 658Q603 650 588 649Q568 652 568 678Q573 708 598 715L621 721" fill="none" stroke="#4f595f" stroke-width="13"/>
                <path d="M621 656Q603 648 588 647Q567 651 567 678Q573 708 598 715L621 720" fill="none" stroke="#a5b3bc" stroke-width="10"/>
                <path d="M574 699Q582 711 598 716" fill="none" stroke="#d8e6ee" stroke-width="4" filter="url(#softer)"/>
                <use href="#cup" x="689" y="643"/>

                <!-- 电源线 -->
                <g fill="none">
                    <path d="M917 790Q900 814 868 823Q812 838 788 868Q764 900 754 943" stroke="#79858d" stroke-width="14"/>
                    <path d="M917 790Q900 814 868 823Q812 838 788 868Q764 900 754 943" stroke="#a7b5bf" stroke-width="9"/>
                    <path d="M868 822Q812 838 788 867Q764 900 754 940" stroke="#c9d8e2" stroke-width="3" filter="url(#softer)"/>
                </g>
                <use href="#cup" x="981" y="766"/>
                <ellipse cx="934" cy="809" rx="13" ry="5" fill="#d5e1e9" transform="rotate(25 934 809)" filter="url(#softer)"/>
                <ellipse cx="934" cy="876" rx="13" ry="6" fill="#c9d5dd" transform="rotate(30 934 876)" filter="url(#softer)"/>
                <path d="M944 813Q925 804 905 815C888 825 882 842 882 857C884 876 893 888 912 887L943 882Q935 872 908 878C898 864 899 832 918 826Q932 820 944 813Z" fill="#94a1aa"/>
                <path d="M884 840Q883 880 910 885" fill="none" stroke="#4e585f" stroke-width="5" filter="url(#softer)"/>
                <path d="M902 850Q902 868 909 877Q925 874 938 877" fill="none" stroke="#59646b" stroke-width="2"/>
                <path d="M911 821Q902 828 901 838" fill="none" stroke="#e2eef6" stroke-width="4" filter="url(#softer)"/>
            </svg>
        </div>

        <div class="feature-bar">
            <span class="grip"></span>
            <button aria-label="草绘"><svg class="gray" viewBox="0 0 24 24"><path d="M4 3H22M4 8H22M4 14H22M4 20H22" stroke-dasharray="1 4"/><path d="M4 14Q10 5 14 10T20 15"/></svg></button>
            <button aria-label="平面"><svg class="gray" viewBox="0 0 24 24"><path d="M3.500 17.500L9 6.500H21.500L16 17.500Z" stroke-width="1.500"/></svg></button>
            <button aria-label="轴"><svg class="gray" viewBox="0 0 24 24"><path d="M8 22L18 2" stroke-width="1.500" stroke-dasharray="5 2"/></svg></button>
            <button aria-label="曲线"><svg class="gray" viewBox="0 0 24 24"><path d="M3 17C6 6 10 8 12 10C16 14 18 8 23 6" stroke-width="1.500"/></svg></button>
            <button aria-label="点"><svg class="gray" viewBox="0 0 24 24"><path d="M10 4L15 9M15 4L10 9M5 14L10 19M10 14L5 19M15 12L20 17M20 12L15 17" stroke-width="1.500"/></svg><svg class="more" viewBox="0 0 4 6"><path d="M0 0L4 3L0 6Z" fill="#abb4b8"/></svg></button>
            <button aria-label="坐标系"><svg class="gray" viewBox="0 0 24 24"><path d="M5 12H17M6 19L17 5M7 6L16 18M3 2L5 5L7 2M5 5V7M3 18H7L3 22H7M18 10L22 14M22 10L18 14"/></svg></button>
            <button aria-label="分析特征"><svg class="gray" viewBox="0 0 24 24"><path d="M4 14H21V21H4Z" fill="#bec6ca"/><path d="M7 7L12 12M12 7L7 12M13 2L18 12"/></svg></button>
            <span class="grip"></span>
            <button aria-label="注释"><svg class="gray" viewBox="0 0 24 24"><path d="M3.500 3.500H15.500V11.500H3.500Z" fill="#dde6ec"/><path d="M15 8H22L16 20M14 20H18M16 20V16"/></svg></button>
            <button aria-label="注释特征"><svg class="gray" viewBox="0 0 24 24"><path d="M3.500 2.500H17.500V14.500H3.500Z"/><circle cx="11" cy="9" r="5" fill="#dde6ec"/><path d="M8 12L11 7L14 12M17 8H22L16 21M14 21H18"/></svg></button>
            <button aria-label="传播注释"><svg class="gray" viewBox="0 0 24 24"><path d="M3.500 2.500H13.500V7.500H3.500ZM7.500 10.500H17.500V15.500H7.500Z" fill="#dde6ec"/><path d="M13 5H19L17 10M17 13H22L18 21M16 21H20"/></svg></button>
            <span class="grip"></span>
            <button aria-label="装配"><svg class="gray" viewBox="0 0 24 24"><path d="M3 8L5 6H9V15H18L16 21H3Z" fill="#ccd3d7"/><path d="M14 5L17 2H22V7L20 10H14Z" fill="#dde2e5"/><path d="M14 5H20V10M20 5L22 2M14 10L10 14M10 11V14H13"/></svg></button>
            <button aria-label="人体模型"><svg class="gray" viewBox="0 0 24 24"><path d="M3 8L5 6H9V15H18L16 21H3Z" fill="#ccd3d7"/><path d="M18 2V9L15 15M18 9L21 15M14 6H22M14 10L10 14M10 11V14H13"/></svg></button>
            <button aria-label="创建元件"><svg class="gray" viewBox="0 0 24 24"><path d="M3 3L5 2H18V14L16 16H3Z" fill="#c4ccd0"/><path d="M8 4H16V12H8Z" fill="#e0e6ea"/><path d="M14.500 11.500H19L22.500 15V22H14.500Z" fill="#fff"/></svg></button>
            <button aria-label="孔"><svg class="gray" viewBox="0 0 24 24"><path d="M4 6H8L10 8V17H15V8L17 6H21V19H4Z" fill="#d4dade" stroke="none"/><path d="M4 12L9 7M4 18L10 12M8 19L11 17M16 13L21 8M15 19L21 13" stroke="#fff"/><path d="M4 6H8L10 8V17H15V8L17 6H21"/></svg></button>
            <button aria-label="壳"><svg class="gray" viewBox="0 0 24 24"><path d="M4 20V10L9 3H14L21 14V17L15 20Z" fill="#dfe5e8"/><path d="M14 3L10 10L15 20M4 10H10"/></svg></button>
            <button aria-label="倒圆角"><svg class="gray" viewBox="0 0 24 24"><path d="M4 8L10 3Q20 4 22 13V17L16 20H4Z" fill="#dfe4e8" stroke="#c5cdd1"/><path d="M9 7L12 4Q20 5 22 13V17L16 20Q18 9 9 7Z" fill="#c8cfd3"/></svg></button>
            <button aria-label="倒角"><svg class="gray" viewBox="0 0 24 24"><path d="M4 9L9 3H14L22 11V16L16 20H4Z" fill="#dfe4e8" stroke="#c5cdd1"/><path d="M9 7L14 3L22 11L16 14ZM16 14V20L22 16V11" fill="#ccd3d7"/></svg></button>
            <span class="grip"></span>
            <button aria-label="拉伸"><svg class="gray" viewBox="0 0 24 24"><path d="M4.500 12.500H12.500V21.500H4.500Z" fill="#d4dade"/><path d="M12 4H21V13M4 12L12 4M13 21L21 13M12 12L21 4" stroke-dasharray="3 2"/></svg></button>
            <button aria-label="旋转"><svg class="gray" viewBox="0 0 24 24"><path d="M13 2V22" stroke-dasharray="4 2"/><path d="M6 11Q10 5 13 7Q19 7 20 11" /><circle cx="7" cy="13" r="3" fill="#dfe5e8"/><circle cx="19" cy="13" r="3" fill="#dfe5e8"/></svg></button>
            <button aria-label="可变截面扫描"><svg class="gray" viewBox="0 0 24 24"><path d="M3 7L8 2L22 12V21H11Z" fill="#e2e8eb"/><path d="M8 7L22 21M3 7H8V2"/></svg></button>
            <button aria-label="边界混合"><svg class="gray" viewBox="0 0 24 24"><path d="M3 17Q6 5 12 4Q18 2 22 7Q17 9 15 20Q10 12 3 17Z" fill="#e2e8eb"/><path d="M7 9Q14 8 17 13M12 4Q9 8 9 14"/></svg></button>
            <button aria-label="造型"><svg class="gray" viewBox="0 0 24 24"><path d="M5 20V10Q10 3 20 6V18Q11 14 5 20Z" fill="#e2e8eb"/><path d="M8 9V15M12 8V14M16 8V14" stroke-dasharray="1 2"/></svg></button>
            <span class="grip"></span>
            <button aria-label="镜像"><svg class="gray" viewBox="0 0 24 24"><path d="M4 5Q9 5 10 11V19H4ZM22 5Q17 5 16 11V19H22Z" fill="#eaf2f7" stroke="#b4bfc5"/><path d="M13 2V22"/></svg></button>
            <button aria-label="合并"><svg class="gray" viewBox="0 0 24 24"><path d="M11 4H21V14H11Z" fill="#eaf2f7"/><circle cx="10" cy="14" r="6" fill="#eaf2f7" fill-opacity=".7"/></svg></button>
            <button aria-label="修剪"><svg class="gray" viewBox="0 0 24 24"><path d="M11 4H21V14H11Z" fill="#eaf2f7"/><circle cx="10" cy="14" r="6" fill="#dce3e7" stroke="#ccd5da"/></svg></button>
            <button aria-label="阵列"><svg class="gray" viewBox="0 0 24 24"><path d="M4 5L6 3H21V18L19 20H4Z" fill="#e8eef1"/><path d="M4 5H19V20M19 5L21 3"/><path d="M7 9H17M7 13H17M7 17H17" stroke-width="2" stroke-dasharray="2 2"/></svg></button>
        </div>
    </main>

    <footer class="taskbar">
        <button class="pin wide" aria-label="开始"><svg class="big" viewBox="0 0 44 44"><circle cx="22" cy="22" r="21" fill="url(#orb)" stroke="#b7cbdc"/><path d="M13 14Q17 9 23 12L21 21Q16 19 11 22Z" fill="#f0592b"/><path d="M25 13Q30 16 35 12L33 22Q28 24 23 21Z" fill="#8fc83c"/><path d="M11 24Q16 21 20 23L18 33Q13 30 8 33Z" fill="#3fa0ea"/><path d="M22 24Q27 27 32 24L30 33Q26 37 20 34Z" fill="#fdcb2e"/></svg></button>
        <button class="pin wide" aria-label="Internet Explorer"><svg class="big" viewBox="0 0 44 44"><path d="M31 31Q27 34 22 33Q14 32 14 25H38Q39 8 24 8Q8 10 8 24Q9 40 24 40Q33 39 37 30ZM14 20Q16 13 23 13Q30 13 31 20Z" fill="#1d7ed0" stroke="#0a4c94"/><path d="M8 40Q-2 42 8 24Q20 5 38 3Q44 5 38 15Q41 5 30 9Q14 18 8 33Q6 40 14 38" fill="#f8cf4a" stroke="#c8932a"/></svg></button>
        <div class="group">
            <button aria-label="文件夹"><svg><use href="#folder"/></svg><span class="serif">I...</span></button>
            <button aria-label="计算机"><svg viewBox="0 0 40 40"><path d="M5 20L24 13L37 20L36 27L17 36L5 29Z" fill="#bfc3c6" stroke="#667"/><path d="M5 20L24 13L37 20L18 27Z" fill="#eef0f1"/><path d="M6 24L16 29V33L6 28Z" fill="#175c4a"/><path d="M2 12L8 11V17L2 18Z" fill="#f0592b"/><path d="M9 11L15 14V19L9 17Z" fill="#8fc83c"/><path d="M3 19L8 18V24L4 25Z" fill="#3fa0ea"/><path d="M9 18L14 20V25L9 24Z" fill="#fdcb2e"/></svg></button>
            <button aria-label="文件夹"><svg><use href="#folder"/></svg></button>
        </div>
        <button class="pin" aria-label="浏览器"><svg viewBox="0 0 40 40"><circle cx="20" cy="19" r="14" fill="none" stroke="#1688f0" stroke-width="10"/><path d="M20 38Q2 36 1 20L11 20Q12 28 20 29Z" fill="#d8eeff"/><path d="M20 39Q12 36 18 30Q20 23 27 24Q33 23 34 29Q41 30 38 37Q36 39 34 39Z" fill="#fff"/></svg></button>
        <button class="pin" aria-label="K"><svg viewBox="0 0 40 40"><rect width="40" height="40" rx="7" fill="#1784ff"/><circle cx="20" cy="20" r="16" fill="none" stroke="#fff" stroke-width="2"/><text x="21" y="29" text-anchor="middle" class="logo-k">K</text></svg></button>
        <button class="pin" aria-label="网盘"><svg viewBox="0 0 40 40"><rect width="40" height="40" rx="8" fill="#fff"/><g fill="none" stroke-width="4"><circle cx="12" cy="25" r="5" stroke="#19b4f5"/><circle cx="28" cy="25" r="5" stroke="#2a88f5"/><path d="M16 23L20 19L24 23" stroke="#2aa0f5"/><circle cx="20" cy="15" r="5" stroke="#ff4a6a"/></g><path d="M13 38H20V40H13Z" fill="#f35"/><path d="M20 38H27V40H20Z" fill="#28f"/></svg></button>
        <button class="pin" aria-label="视频"><svg><use href="#tencent"/></svg></button>
        <button class="pin" aria-label="爱奇艺"><svg viewBox="0 0 40 40"><rect width="40" height="40" rx="4" fill="#00c80a"/><path d="M5 12V9Q20 5 35 9V12M5 28V31Q20 35 35 31V28" fill="none" stroke="#fff" stroke-width="2"/><text x="20" y="25" text-anchor="middle" class="logo-iqiyi">iQIYI</text></svg></button>
        <div class="group">
            <button aria-label="易"><svg viewBox="0 0 40 40"><path d="M0 0H40V40H0Z" fill="#fff"/><path d="M8 8Q10 1 23 3Q36 6 35 15Q30 9 24 11L33 19Q30 30 36 38M7 5L15 13M17 3Q32 14 29 22Q37 27 29 34M24 28L20 38" fill="none" stroke="#bbb" stroke-width="3"/><rect x="1" y="12" width="20" height="20" rx="2" fill="#f11"/><text x="11" y="28" text-anchor="middle" class="logo-yi">易</text></svg></button>
        </div>
        <div class="group">
            <button aria-label="微信"><svg><use href="#wechat"/></svg></button>
            <button aria-label="微信"><svg><use href="#wechat"/></svg></button>
        </div>
        <div class="group">
            <button aria-label="零件"><svg class="cube"><use href="#cube"/></svg></button>
            <button class="current" aria-label="组件"><svg class="cube" viewBox="0 0 34 34"><path d="M1 5L4 2H9V24H33V29L29 33H1Z" fill="url(#yellowDots)" stroke="#222"/><path d="M8 5L11 1H33V24H8Z" fill="#fff" stroke="#222"/><path d="M8 5H29V24H8Z" fill="url(#cyanDots)"/><path d="M8 24H31" stroke="#000" stroke-width="2"/></svg></button>
            <button aria-label="零件"><svg class="cube"><use href="#cube"/></svg><span>J...</span></button>
            <button aria-label="零件"><svg class="cube"><use href="#cube"/></svg></button>
        </div>
        <div class="group">
            <button aria-label="监视器"><svg viewBox="0 0 40 40"><path d="M2 12L10 8V30L4 34Z" fill="#d9d9d5" stroke="#888"/><path d="M8 4L36 6L35 28L13 29Z" fill="#a9aaa4" stroke="#555"/><path d="M11 6L33 8L32 26L15 26Z" fill="#021"/><path d="M14 18L17 12L19 21L22 10L25 22L28 13L30 20M14 22L20 15L26 18L31 14" fill="none" stroke="#2a3"/><path d="M18 28H26L30 35Q22 40 15 35Z" fill="#ddd"/></svg></button>
        </div>
        <div class="group">
            <button aria-label="画像"><svg viewBox="0 0 40 40"><path d="M0 0H40V40H0Z" fill="#1b1b1b"/><path d="M2 0H32Q19 3 13 13L12 19L24 25L19 9L27 17L38 15Q40 25 32 38L25 30L8 20Q2 14 2 0Z" fill="#e5e5e5"/><path d="M14 12L18 23L12 19ZM24 25L31 26" fill="#333"/><path d="M17 23H24" stroke="#b22" stroke-width="2"/></svg></button>
        </div>
        <div class="group">
            <button aria-label="浏览器"><svg viewBox="0 0 40 40"><circle cx="20" cy="21" r="18" fill="#fff"/><path d="M28 29Q18 36 14 25H34Q36 8 21 8Q7 9 7 22Q8 37 21 37Q30 36 33 28ZM14 19Q15 13 21 13Q27 13 28 19Z" fill="#63b81d"/><path d="M5 36Q2 12 32 2L38 5Q34 2 22 9Q7 20 9 35Z" fill="#78c92b"/></svg></button>
        </div>
        <div class="tray">
            <span class="lang">CH</span>
            <svg class="raised-icon" viewBox="0 0 20 20"><rect width="20" height="20" rx="2" fill="#2787f5"/><path d="M6 9Q6 4 10 4Q14 4 14 9L16 14L13 13L12 16L10 15L8 16L7 13L4 14Z" fill="#fff"/></svg>
            <svg viewBox="0 0 40 40"><rect width="40" height="40" rx="4" fill="#00c80a"/><path d="M5 12V9Q20 5 35 9V12M5 28V31Q20 35 35 31V28" fill="none" stroke="#fff" stroke-width="2"/><text x="20" y="25" text-anchor="middle" class="logo-iqiyi">iQIYI</text></svg>
            <svg viewBox="0 0 20 20"><path d="M0 17L14 2L11 17Z" fill="#f00"/><path d="M11 10L19 17H15Z" fill="#0e2"/></svg>
            <svg viewBox="0 0 20 20"><path d="M3 2H17V17H3Z" fill="#010" stroke="#dde"/><path d="M4 5H16M4 8H16M4 11H16M4 14H16M7 3V16M10 3V16M13 3V16" stroke="#080"/></svg>
            <svg><use href="#wechat"/></svg>
            <svg viewBox="0 0 20 20"><path d="M3 3H17V17H3Z" fill="#60738a" stroke="#223"/><path d="M5 14Q8 6 11 6L10 12L15 13" fill="none" stroke="#123" stroke-width="2"/><circle cx="16" cy="16" r="3" fill="#1bf"/></svg>
            <svg viewBox="0 0 20 20"><path d="M1 10L10 5L18 6L12 13L7 15Z" fill="#555" stroke="#ccc"/><circle cx="15" cy="14" r="4" fill="#2a2"/><path d="M13 14L15 16L17 12" fill="none" stroke="#fff"/></svg>
            <svg><use href="#tencent"/></svg>
            <svg viewBox="0 0 20 20"><path d="M1 7H4L9 2V18L4 13H1Z" fill="#fff" stroke="#455"/><path d="M12 7Q14 10 12 13M14 5Q18 10 14 15M17 4Q21 10 17 16" fill="none" stroke="#fff"/></svg>
            <svg viewBox="0 0 20 20"><path d="M6 5H19V15H6Z" fill="#456" stroke="#fff"/><path d="M1 1H6V9H1ZM3 9V18H10M12 16V18H17" fill="none" stroke="#fff"/></svg>
            <div class="clock"><time>下午 8:03</time><span>2025/6/7 星期六</span></div>
        </div>
        <button class="show-desktop" aria-label="显示桌面"></button>
        <div class="watermark">
            <svg viewBox="0 0 20 44"><path d="M8 0Q20 12 18 26Q15 38 4 40Q0 37 4 33Q14 18 8 9Q14 12 14 20Q15 8 8 0Z" fill="#ff6a33"/></svg>
            <p><b>野火</b>论坛</p>
            <small>www.proewildfire.cn</small>
        </div>
    </footer>
</body>
</html>
```
FILE: styles.css
```
* {
    box-sizing: border-box;
}

body {
    margin: 0;
    height: 100vh;
    display: flex;
    flex-direction: column;
    overflow: hidden;
    background: #dbe9f2;
    color: #2f3a42;
    font-family: "Noto Sans", "Noto Sans CJK SC", sans-serif;
    font-size: 15px;
}

button {
    border: 0;
    padding: 0;
    background: none;
    font: inherit;
    color: inherit;
}

ul {
    list-style: none;
    margin: 0;
    padding: 0;
}

svg {
    display: block;
    flex: none;
}

.defs {
    position: absolute;
}

/* 标题栏 */
.titlebar {
    height: 27px;
    flex: none;
    display: flex;
    align-items: center;
    padding-bottom: 1px;
    border-top: 1px solid #333;
    background: linear-gradient(#98b1d1, #b7d0ea);
}

.app-icon {
    width: 20px;
    height: 18px;
    margin: 0 8px 0 2px;
}

.titlebar h1 {
    margin: 0;
    flex: 1;
    font-size: 15px;
    line-height: 20px;
    font-weight: 400;
    color: #000;
}

.window-buttons {
    display: flex;
    gap: 2px;
    padding-right: 2px;
}

.window-buttons button {
    width: 39px;
    height: 22px;
    display: flex;
    align-items: center;
    justify-content: center;
    border: 1px solid #5d6f8f;
    border-radius: 3px;
    background: linear-gradient(#c3d4e9 45%, #98b0cf 50%, #b5cbe4);
    box-shadow: inset 0 0 0 1px #d5e2f2;
}

.window-buttons .close {
    border-color: #4d1520;
    background: linear-gradient(#e5a198 45%, #b93d24 50%, #d58372);
    box-shadow: inset 0 0 0 1px #e9b5ac;
}

.window-buttons svg {
    width: 16px;
    height: 16px;
}

/* 菜单 */
.menubar {
    height: 33px;
    flex: none;
    display: flex;
    align-items: center;
    gap: 15px;
    padding: 5px 7px 0;
    background: linear-gradient(#f2fbff, #e6edf6);
    border-bottom: 1px solid #a9c4d6;
}

.menubar a {
    color: inherit;
    text-decoration: none;
    line-height: 20px;
    white-space: nowrap;
}

/* 工具栏 */
.toolbar {
    height: 34px;
    flex: none;
    display: flex;
    align-items: center;
    border-top: 1px solid #f6fbfd;
    border-bottom: 1px solid #a9c4d6;
}

.toolbar button {
    width: 28px;
    height: 26px;
    display: flex;
    align-items: center;
    justify-content: center;
}

.toolbar button svg {
    width: 24px;
    height: 24px;
}

.toolbar .drop {
    width: 13px;
    color: #a5b0b8;
}

.toolbar .drop svg {
    width: 6px;
    height: 4px;
}

.toolbar .framed {
    border: 1px solid #a7b3bb;
    border-radius: 3px;
}

.toolbar .active {
    border-color: #6c8193;
    background: linear-gradient(#d3eafa, #acd6f4);
}

.grip {
    width: 14px;
    height: 28px;
    flex: none;
    background: repeating-linear-gradient(#dbe9f2 0 1px, transparent 1px 2px), linear-gradient(90deg, transparent 4px, #3e7ca4 4px 5px, transparent 5px 7px, #3e7ca4 7px 8px, transparent 8px);
}

.gray {
    fill: none;
    stroke: #98a2a8;
}

.icon-text {
    font: 700 8px "Liberation Mono", monospace;
    fill: #222;
}

/* 消息区 */
.message-area {
    height: 86px;
    flex: none;
    display: flex;
    align-items: flex-end;
    padding: 0 4px 2px 2px;
    border-top: 1px solid #f6fbfd;
    border-bottom: 1px solid #b5cddb;
}

.messages {
    flex: 1;
    font-size: 13px;
    line-height: 19px;
    padding-bottom: 3px;
}

.messages li {
    display: flex;
    align-items: center;
    gap: 2px;
}

.messages svg {
    width: 12px;
    height: 12px;
}

.dot {
    width: 5px;
    height: 5px;
    margin: 0 3px 4px 4px;
    border-radius: 50%;
    background: #00f;
}

.status {
    width: 33px;
    height: 25px;
    display: flex;
    align-items: center;
    justify-content: center;
    border: 1px solid #bccdd8;
    border-width: 0 1px;
    margin-right: 98px;
}

.light {
    width: 12px;
    height: 20px;
}

.filter {
    position: relative;
    width: 358px;
}

.filter select {
    display: block;
    width: 100%;
    height: 23px;
    appearance: none;
    border: 1px solid #6ba0bd;
    border-radius: 3px;
    background: #fff;
}

.filter svg {
    position: absolute;
    right: 5px;
    top: 10px;
    width: 6px;
    height: 4px;
}

/* 工作区 */
.workspace {
    flex: 1;
    min-height: 0;
    display: flex;
}

.sidebar {
    width: 329px;
    display: grid;
    grid-template: auto 1fr / 320px 9px;
    padding-top: 3px;
    background: repeating-linear-gradient(135deg, #d2e1ec 0 2px, #cddfea 2px 4px);
}

.tabs {
    grid-column: 1 / 3;
    display: flex;
    padding-left: 7px;
}

.tab {
    width: 42px;
    height: 25px;
    display: flex;
    align-items: center;
    padding-left: 11px;
    border-radius: 4px 0 0 0;
    background: linear-gradient(#a9c8dd, #c3d8e6);
    clip-path: polygon(0 0, 75% 0, 100% 100%, 0 100%);
}

.tab.selected {
    background: linear-gradient(#fff, #f2f7fa);
}

.tab svg {
    width: 20px;
    height: 20px;
}

.panel {
    display: flex;
    flex-direction: column;
    min-height: 0;
    padding: 0 7px 7px;
    border-top: 1px solid #9ba5ab;
    border-right: 1px solid #b0bdc6;
    border-radius: 0 4px 0 0;
    background: linear-gradient(90deg, #fff, rgba(255, 255, 255, 0) 60%);
}

.panel-head {
    height: 30px;
    flex: none;
    display: flex;
    align-items: center;
    padding: 0 0 2px 19px;
}

.panel-head h2 {
    margin: 0;
    flex: 1;
    font-size: 16px;
    line-height: 20px;
    font-weight: 700;
}

.panel-head button {
    display: flex;
    align-items: center;
    gap: 4px;
    margin-left: 8px;
    color: #000;
}

.panel-head button:last-child {
    margin-right: 1px;
}

.tool {
    width: 20px;
    height: 20px;
}

.mini {
    width: 7px;
    height: 4px;
}

.tree {
    flex: 1;
    width: 305px;
    padding: 1px 4px;
    border: 1px solid #6b9fb8;
    border-radius: 4px;
    background: #fff;
    font-size: 16px;
}

.row {
    height: 22px;
    display: flex;
    align-items: center;
    line-height: 22px;
    white-space: nowrap;
}

.tree ul {
    padding-left: 8px;
}

.tree ul ul {
    padding-left: 20px;
}

.node {
    width: 14px;
    height: 14px;
    margin-right: 5px;
}

.elbow {
    width: 12px;
    height: 22px;
}

.toggle {
    width: 9px;
    height: 9px;
    margin: 0 8px 0 -17px;
    border: 1px solid #8fb4d0;
    border-radius: 2px;
    background: linear-gradient(#333, #333) center / 5px 1px no-repeat, #d6e9f6;
}

.mark {
    width: 5px;
    height: 7px;
    margin: 0 2px 8px 0;
    border: 1px solid #333;
}

.splitter {
    display: flex;
    flex-direction: column;
    align-items: flex-end;
    justify-content: center;
    gap: 11px;
    padding-bottom: 28px;
}

.splitter span {
    width: 8px;
    height: 92px;
    border: 1px solid #c3d3de;
    border-right: 0;
    background: radial-gradient(circle, #345 1px, transparent 2px);
}

.splitter .raised {
    border: 1px solid #7f9aae;
    background-color: #bdd0de;
}

.viewport {
    flex: 1;
    min-width: 0;
    background: linear-gradient(#c5dbeb, #bdd3e8 8%, #aec3de 23%, #a3c0da 31%, #8aa7c8 53%, #7f9cc4 63%, #6f8fb8 78%, #6482ae 91%, #5a79a8);
}

.viewport svg {
    width: 100%;
    height: 100%;
}

.feature-bar {
    width: 41px;
    flex: none;
}

.feature-bar button {
    height: 28px;
    width: 41px;
    display: flex;
    align-items: center;
    justify-content: space-between;
    padding: 0 4px 0 1px;
}

.feature-bar button .gray {
    width: 24px;
    height: 24px;
}

.feature-bar .more {
    width: 4px;
    height: 6px;
}

.feature-bar .grip {
    display: block;
    width: 41px;
    height: 14px;
    background: repeating-linear-gradient(90deg, #dbe9f2 0 1px, transparent 1px 2px), linear-gradient(transparent 4px, #3e7ca4 4px 5px, transparent 5px 7px, #3e7ca4 7px 8px, transparent 8px);
}

/* 任务栏 */
.taskbar {
    position: relative;
    height: 48px;
    flex: none;
    display: flex;
    border-top: 1px solid #3b4756;
    background: #8394ab;
    box-shadow: inset 0 1px #c4cedb;
    color: #fff;
}

.taskbar button {
    flex: none;
    display: flex;
    align-items: center;
    justify-content: center;
}

.taskbar .pin {
    width: 61px;
}

.taskbar .wide {
    width: 66px;
}

.taskbar button svg {
    width: 40px;
    height: 40px;
}

.taskbar .pin .big {
    width: 44px;
    height: 44px;
}

.taskbar button .cube {
    width: 34px;
    height: 34px;
}

.group {
    flex: none;
    display: flex;
    margin-right: 2px;
    border-radius: 3px;
    box-shadow: inset 0 0 0 1px #2d3948, inset 0 0 0 2px #c3ccd8;
    background: linear-gradient(#bbc6d4, #98a8bb 45%, #8697ae 55%, #8fa0b4);
}

.group button {
    width: 75px;
}

.group button + button {
    border-left: 1px solid #64748b;
}

.group button span {
    margin-left: 6px;
}

.group .current {
    background: linear-gradient(#dfe5eb, #bdc7d3);
}

.serif {
    font-family: "Liberation Serif", serif;
}

.tray {
    flex: 1;
    display: flex;
    align-items: center;
    justify-content: flex-end;
    gap: 10px;
}

.tray svg {
    width: 20px;
    height: 20px;
}

.tray .raised-icon {
    margin-bottom: 4px;
}

.lang {
    font-family: "Liberation Serif", serif;
    font-size: 13px;
    padding-bottom: 4px;
}

.clock {
    display: flex;
    flex-direction: column;
    align-items: center;
    width: 140px;
    font-size: 15px;
    line-height: 21px;
}

.taskbar .show-desktop {
    width: 15px;
    border: 1px solid #3b4756;
    background: linear-gradient(#5b6b80, #74859b);
    box-shadow: inset 0 0 0 1px #a9b6c5;
}

.watermark {
    position: absolute;
    right: 16px;
    bottom: 9px;
    width: 170px;
    color: #000;
}

.watermark p {
    margin: 0;
    font-size: 41px;
    line-height: 44px;
    font-weight: 300;
    font-style: italic;
    white-space: nowrap;
}

.watermark b {
    font-weight: 300;
    color: #ff6a33;
}

.watermark svg {
    position: absolute;
    left: 66px;
    top: -18px;
    width: 20px;
    height: 44px;
}

.watermark small {
    display: block;
    font-size: 14px;
    line-height: 14px;
    font-style: italic;
    color: #8f8d92;
    text-align: center;
}

.logo-iqiyi {
    font: 700 13px "Open Sans", sans-serif;
    fill: #fff;
}

.logo-k {
    font: italic 700 25px "Open Sans", sans-serif;
    fill: #fff;
}

.logo-yi {
    font: 700 17px "Noto Sans CJK SC", sans-serif;
    fill: #fff;
}
```
